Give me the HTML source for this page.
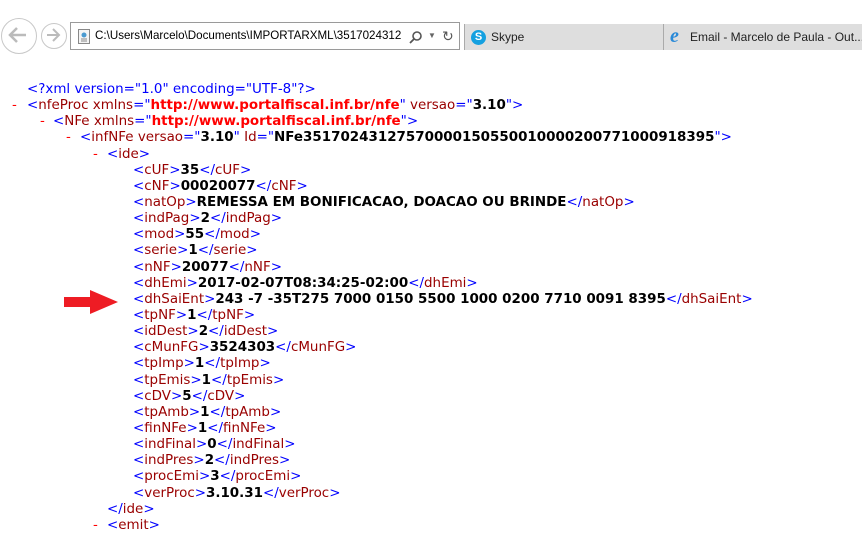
<!DOCTYPE html>
<html><head><meta charset="utf-8"><style>
*{margin:0;padding:0}
body{width:862px;height:534px;background:#fff;overflow:hidden;position:relative;font-family:"DejaVu Sans",Verdana,sans-serif}
.bar{position:absolute;left:0;top:0;width:862px;height:58px;background:#fff}
.circ{position:absolute;border:1px solid #c8c8c8;border-radius:50%;}
.addr{position:absolute;left:70px;top:22px;width:390px;height:28px;border:1px solid #9a9a9a;box-sizing:border-box;font:11.6px "Liberation Sans",sans-serif;color:#000;line-height:26px;padding-left:24px;white-space:nowrap}
.tab{position:absolute;top:24px;height:26px;background:#dedede;border-left:1px solid #aaa;box-sizing:border-box;font:12px "Liberation Sans",sans-serif;line-height:26px;color:#222;white-space:nowrap;overflow:hidden}
#x{position:absolute;left:0;top:82px;font-size:13.45px;line-height:16.15px;color:#000}
.b{color:#0000ff}.t{color:#990000}.r{color:#ff0000;font-weight:bold}.k{font-weight:bold}.m{color:#ff0000}
.l{position:relative;height:16.15px;white-space:pre}
.l span.d{position:absolute}
</style></head><body>
<div class="bar">
<div class="circ" style="left:1px;top:18px;width:34px;height:34px"></div>
<svg style="position:absolute;left:8px;top:26px" width="20" height="18" viewBox="0 0 20 18"><path d="M9 2 L2 9 L9 16 M2 9 H18" fill="none" stroke="#bbb" stroke-width="2.5"/></svg>
<div class="circ" style="left:41px;top:23px;width:24px;height:24px"></div>
<svg style="position:absolute;left:45px;top:28px" width="16" height="14" viewBox="0 0 16 14"><path d="M8 1 L14 7 L8 13 M14 7 H2" fill="none" stroke="#bbb" stroke-width="2"/></svg>
<div class="addr"><svg style="position:absolute;left:7px;top:6px" width="12" height="15"><rect x="0.5" y="0.5" width="11" height="14" fill="#f4f4f4" stroke="#888"/><circle cx="6" cy="6" r="2.5" fill="#4a9ad0"/><path d="M3 10h6M3 12h6" stroke="#888"/></svg>C:\Users\Marcelo\Documents\IMPORTARXML\3517024312<svg style="position:absolute;left:338px;top:7px" width="14" height="14"><circle cx="8" cy="6" r="4" fill="none" stroke="#555" stroke-width="1.6"/><path d="M5 9 L1 13" stroke="#555" stroke-width="1.8"/></svg><span style="position:absolute;left:357px;color:#666;font-size:8px">&#9660;</span><span style="position:absolute;left:371px;color:#555;font-size:14px">&#8635;</span></div>
<div class="tab" style="left:464px;width:200px;padding-left:26px"><span style="position:absolute;left:6px;top:6px;width:15px;height:15px;border-radius:50%;background:#14a0e0;color:#fff;font:bold 11px 'Liberation Sans';line-height:15px;text-align:center">S</span>Skype</div>
<div class="tab" style="left:663px;width:199px;padding-left:26px"><span style="position:absolute;left:6px;top:1px;color:#2a8ad8;font:italic bold 20px 'Liberation Serif';">e</span>Email - Marcelo de Paula - Out...</div>
</div>
<div id="x"><div class="l" style="margin-left:27px"><span class="b">&lt;?xml version="1.0" encoding="UTF-8"?&gt;</span></div><div class="l" style="margin-left:27px"><span class="d m" style="left:-15px">-</span><span class="b">&lt;</span><span class="t">nfeProc xmlns</span><span class="b">="</span><span class="r">http://www.portalfiscal.inf.br/nfe</span><span class="b">"</span><span class="t"> versao</span><span class="b">="</span><span class="k">3.10</span><span class="b">"&gt;</span></div><div class="l" style="margin-left:53px"><span class="d m" style="left:-13px">-</span><span class="b">&lt;</span><span class="t">NFe xmlns</span><span class="b">="</span><span class="r">http://www.portalfiscal.inf.br/nfe</span><span class="b">"&gt;</span></div><div class="l" style="margin-left:80px"><span class="d m" style="left:-14px">-</span><span class="b">&lt;</span><span class="t">infNFe versao</span><span class="b">="</span><span class="k">3.10</span><span class="b">"</span><span class="t"> Id</span><span class="b">="</span><span class="k">NFe35170243127570000150550010000200771000918395</span><span class="b">"&gt;</span></div><div class="l" style="margin-left:107px"><span class="d m" style="left:-14px">-</span><span class="b">&lt;</span><span class="t">ide</span><span class="b">&gt;</span></div><div style="margin-left:133px"><div class="l"><span class="b">&lt;</span><span class="t">cUF</span><span class="b">&gt;</span><span class="k">35</span><span class="b">&lt;/</span><span class="t">cUF</span><span class="b">&gt;</span></div><div class="l"><span class="b">&lt;</span><span class="t">cNF</span><span class="b">&gt;</span><span class="k">00020077</span><span class="b">&lt;/</span><span class="t">cNF</span><span class="b">&gt;</span></div><div class="l"><span class="b">&lt;</span><span class="t">natOp</span><span class="b">&gt;</span><span class="k">REMESSA EM BONIFICACAO, DOACAO OU BRINDE</span><span class="b">&lt;/</span><span class="t">natOp</span><span class="b">&gt;</span></div><div class="l"><span class="b">&lt;</span><span class="t">indPag</span><span class="b">&gt;</span><span class="k">2</span><span class="b">&lt;/</span><span class="t">indPag</span><span class="b">&gt;</span></div><div class="l"><span class="b">&lt;</span><span class="t">mod</span><span class="b">&gt;</span><span class="k">55</span><span class="b">&lt;/</span><span class="t">mod</span><span class="b">&gt;</span></div><div class="l"><span class="b">&lt;</span><span class="t">serie</span><span class="b">&gt;</span><span class="k">1</span><span class="b">&lt;/</span><span class="t">serie</span><span class="b">&gt;</span></div><div class="l"><span class="b">&lt;</span><span class="t">nNF</span><span class="b">&gt;</span><span class="k">20077</span><span class="b">&lt;/</span><span class="t">nNF</span><span class="b">&gt;</span></div><div class="l"><span class="b">&lt;</span><span class="t">dhEmi</span><span class="b">&gt;</span><span class="k">2017-02-07T08:34:25-02:00</span><span class="b">&lt;/</span><span class="t">dhEmi</span><span class="b">&gt;</span></div><div class="l"><span class="b">&lt;</span><span class="t">dhSaiEnt</span><span class="b">&gt;</span><span class="k">243 -7 -35T275 7000 0150 5500 1000 0200 7710 0091 8395</span><span class="b">&lt;/</span><span class="t">dhSaiEnt</span><span class="b">&gt;</span></div><div class="l"><span class="b">&lt;</span><span class="t">tpNF</span><span class="b">&gt;</span><span class="k">1</span><span class="b">&lt;/</span><span class="t">tpNF</span><span class="b">&gt;</span></div><div class="l"><span class="b">&lt;</span><span class="t">idDest</span><span class="b">&gt;</span><span class="k">2</span><span class="b">&lt;/</span><span class="t">idDest</span><span class="b">&gt;</span></div><div class="l"><span class="b">&lt;</span><span class="t">cMunFG</span><span class="b">&gt;</span><span class="k">3524303</span><span class="b">&lt;/</span><span class="t">cMunFG</span><span class="b">&gt;</span></div><div class="l"><span class="b">&lt;</span><span class="t">tpImp</span><span class="b">&gt;</span><span class="k">1</span><span class="b">&lt;/</span><span class="t">tpImp</span><span class="b">&gt;</span></div><div class="l"><span class="b">&lt;</span><span class="t">tpEmis</span><span class="b">&gt;</span><span class="k">1</span><span class="b">&lt;/</span><span class="t">tpEmis</span><span class="b">&gt;</span></div><div class="l"><span class="b">&lt;</span><span class="t">cDV</span><span class="b">&gt;</span><span class="k">5</span><span class="b">&lt;/</span><span class="t">cDV</span><span class="b">&gt;</span></div><div class="l"><span class="b">&lt;</span><span class="t">tpAmb</span><span class="b">&gt;</span><span class="k">1</span><span class="b">&lt;/</span><span class="t">tpAmb</span><span class="b">&gt;</span></div><div class="l"><span class="b">&lt;</span><span class="t">finNFe</span><span class="b">&gt;</span><span class="k">1</span><span class="b">&lt;/</span><span class="t">finNFe</span><span class="b">&gt;</span></div><div class="l"><span class="b">&lt;</span><span class="t">indFinal</span><span class="b">&gt;</span><span class="k">0</span><span class="b">&lt;/</span><span class="t">indFinal</span><span class="b">&gt;</span></div><div class="l"><span class="b">&lt;</span><span class="t">indPres</span><span class="b">&gt;</span><span class="k">2</span><span class="b">&lt;/</span><span class="t">indPres</span><span class="b">&gt;</span></div><div class="l"><span class="b">&lt;</span><span class="t">procEmi</span><span class="b">&gt;</span><span class="k">3</span><span class="b">&lt;/</span><span class="t">procEmi</span><span class="b">&gt;</span></div><div class="l"><span class="b">&lt;</span><span class="t">verProc</span><span class="b">&gt;</span><span class="k">3.10.31</span><span class="b">&lt;/</span><span class="t">verProc</span><span class="b">&gt;</span></div></div><div class="l" style="margin-left:107px"><span class="b">&lt;/</span><span class="t">ide</span><span class="b">&gt;</span></div><div class="l" style="margin-left:107px"><span class="d m" style="left:-14px">-</span><span class="b">&lt;</span><span class="t">emit</span><span class="b">&gt;</span></div></div>
<svg style="position:absolute;left:62px;top:289px" width="58" height="26" viewBox="0 0 58 26"><path d="M2 8 H28 V1 L56 13 L28 25 V18 H2 Z" fill="#ee1c24"/></svg>
</body></html>
